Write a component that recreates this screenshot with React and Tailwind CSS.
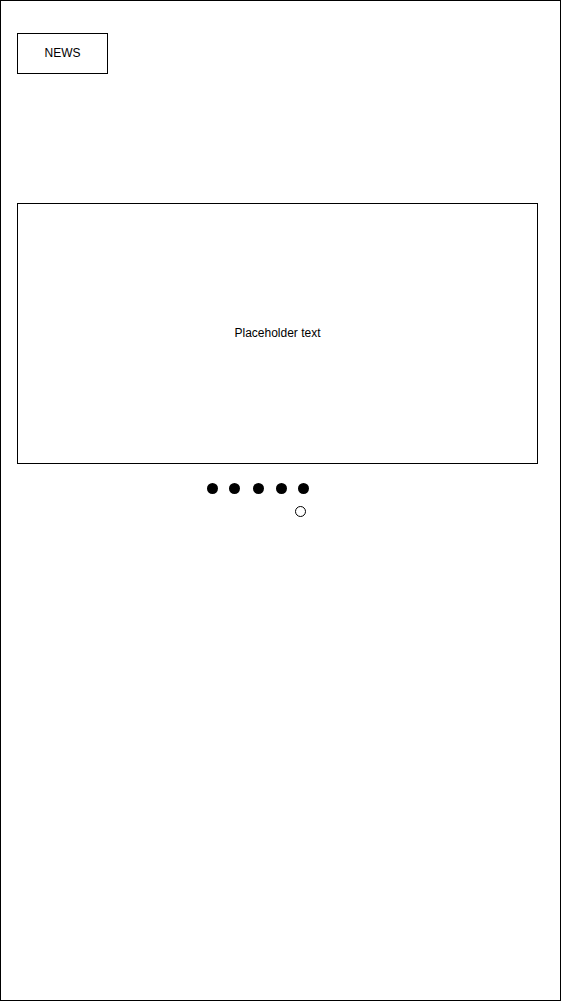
export default function App() {
  const dots = ["ml-[206px]", "ml-[11px]", "ml-[13px]", "ml-[12px]", "ml-[11px]"];

  return (
    <div className="w-[562px] h-[1002px] bg-white font-['Liberation_Sans',Arial,sans-serif] text-black">
      <div className="w-[561px] h-[1001px] border border-black">
        <div className="ml-[16px] mt-[32px] w-[91px] h-[41px] border border-black flex items-center justify-center pb-[2px] text-[12px]">
          NEWS
        </div>

        <div className="ml-[16px] mt-[129px] w-[521px] h-[261px] border border-black flex items-center justify-center pb-[2px] text-[12px]">
          Placeholder text
        </div>

        <div className="mt-[19px] flex">
          {dots.map((m, i) => (
            <div key={i} className={`${m} w-[11px] h-[11px] rounded-full bg-black`} />
          ))}
        </div>

        <div className="ml-[294px] mt-[12px] w-[11px] h-[11px] rounded-full border border-black" />
      </div>
    </div>
  );
}
